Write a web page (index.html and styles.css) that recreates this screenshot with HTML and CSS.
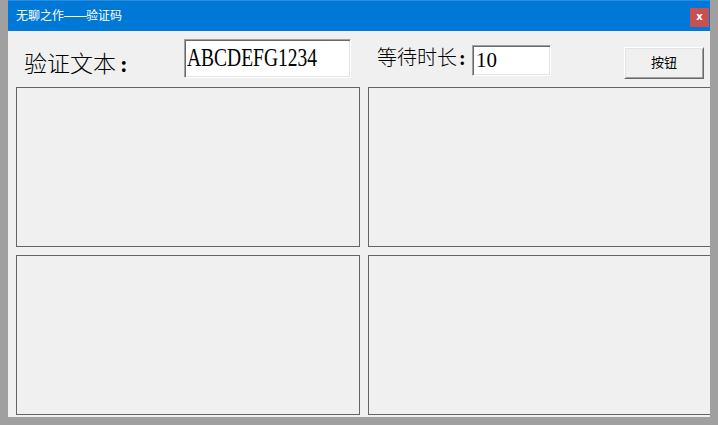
FILE: index.html
```html
<!DOCTYPE html>
<html lang="zh-CN">
<head>
<meta charset="utf-8">
<title>无聊之作——验证码</title>
<link rel="stylesheet" href="styles.css">
</head>
<body>
<div class="window">
  <div class="titlebar">
    <span class="title">无聊之作<span class="dash">——</span>验证码</span>
    <span class="close">x</span>
  </div>
  <div class="toolbar">
    <div class="label label-text">验证文本<span class="colon">:</span></div>
    <div class="field field-text"><span class="field-value-wide">ABCDEFG1234</span></div>
    <div class="label label-wait">等待时长<span class="colon colon-small">:</span></div>
    <div class="field field-wait"><span class="field-value">10</span></div>
    <div class="button">按钮</div>
  </div>
  <div class="panels">
    <div class="panel"></div>
    <div class="panel"></div>
    <div class="panel"></div>
    <div class="panel"></div>
  </div>
</div>
</body>
</html>
```
FILE: styles.css
```css
html, body {
  margin: 0;
  padding: 0;
}
body {
  background: #a0a0a0;
  width: 718px;
  height: 425px;
  overflow: hidden;
  padding-left: 8px;
  box-sizing: border-box;
  font-family: "Noto Sans CJK SC", "Noto Sans", sans-serif;
}
.window {
  width: 702px;
  height: 417px;
  background: #f0f0f0;
  overflow: hidden;
}
.titlebar {
  height: 31px;
  background: #0078d7;
  border-top: 1px solid #2a8be0;
  box-sizing: border-box;
  display: flex;
  align-items: center;
  justify-content: space-between;
  padding-left: 8px;
}
.title {
  color: #ffffff;
  font-size: 12px;
  line-height: 14px;
  margin-top: -2px;
}
.dash {
  font-family: "Liberation Sans", sans-serif;
  letter-spacing: -1px;
}
.close {
  width: 19px;
  height: 19px;
  background: #c75050;
  color: #ffffff;
  font-family: "DejaVu Sans", sans-serif;
  font-weight: bold;
  font-size: 10px;
  line-height: 17px;
  text-align: center;
  margin-right: 1px;
  margin-top: 3px;
}
.toolbar {
  height: 56px;
  display: flex;
  align-items: flex-start;
}
.label {
  color: #000000;
  white-space: nowrap;
  font-weight: 300;
}
.label-text {
  font-size: 23px;
  line-height: 24px;
  width: 160px;
  margin-left: 16px;
  margin-top: 19px;
}
.label-wait {
  font-size: 20px;
  line-height: 22px;
  width: 95px;
  margin-left: 26px;
  margin-top: 15px;
}
.colon {
  font-family: "Liberation Serif", serif;
  font-weight: bold;
  margin-left: 4px;
}
.colon-small {
  margin-left: 2px;
}
.field {
  background: #ffffff;
  box-sizing: border-box;
  border-top: 1px solid #a0a0a0;
  border-left: 1px solid #a0a0a0;
  border-right: 1px solid #ffffff;
  border-bottom: 1px solid #ffffff;
  box-shadow: inset 1px 1px 0 #696969, inset -1px -1px 0 #e3e3e3;
  overflow: hidden;
  white-space: nowrap;
  color: #000000;
}
.field-text {
  width: 167px;
  height: 39px;
  margin-top: 8px;
  padding-left: 2px;
  font-family: "Liberation Serif", serif;
  font-size: 25px;
  line-height: 36px;
}
.field-value-wide {
  display: inline-block;
  transform: scaleX(0.78);
  transform-origin: left center;
}
.field-wait {
  width: 79px;
  height: 31px;
  margin-top: 14px;
  padding-left: 3px;
  font-family: "Liberation Serif", serif;
  font-size: 21px;
  line-height: 29px;
}
.button {
  width: 80px;
  height: 32px;
  margin-left: 73px;
  margin-top: 16px;
  box-sizing: border-box;
  background: #f0f0f0;
  border-top: 1px solid #ffffff;
  border-left: 1px solid #ffffff;
  border-right: 1px solid #696969;
  border-bottom: 1px solid #696969;
  box-shadow: inset 1px 1px 0 #e3e3e3, inset -1px -1px 0 #a0a0a0;
  font-size: 13px;
  line-height: 28px;
  text-align: center;
  color: #000000;
}
.panels {
  display: grid;
  grid-template-columns: 344px 344px;
  grid-template-rows: 160px 160px;
  gap: 8px;
  padding-left: 8px;
}
.panel {
  border: 1px solid #646464;
  box-sizing: border-box;
  background: #f0f0f0;
}
```
